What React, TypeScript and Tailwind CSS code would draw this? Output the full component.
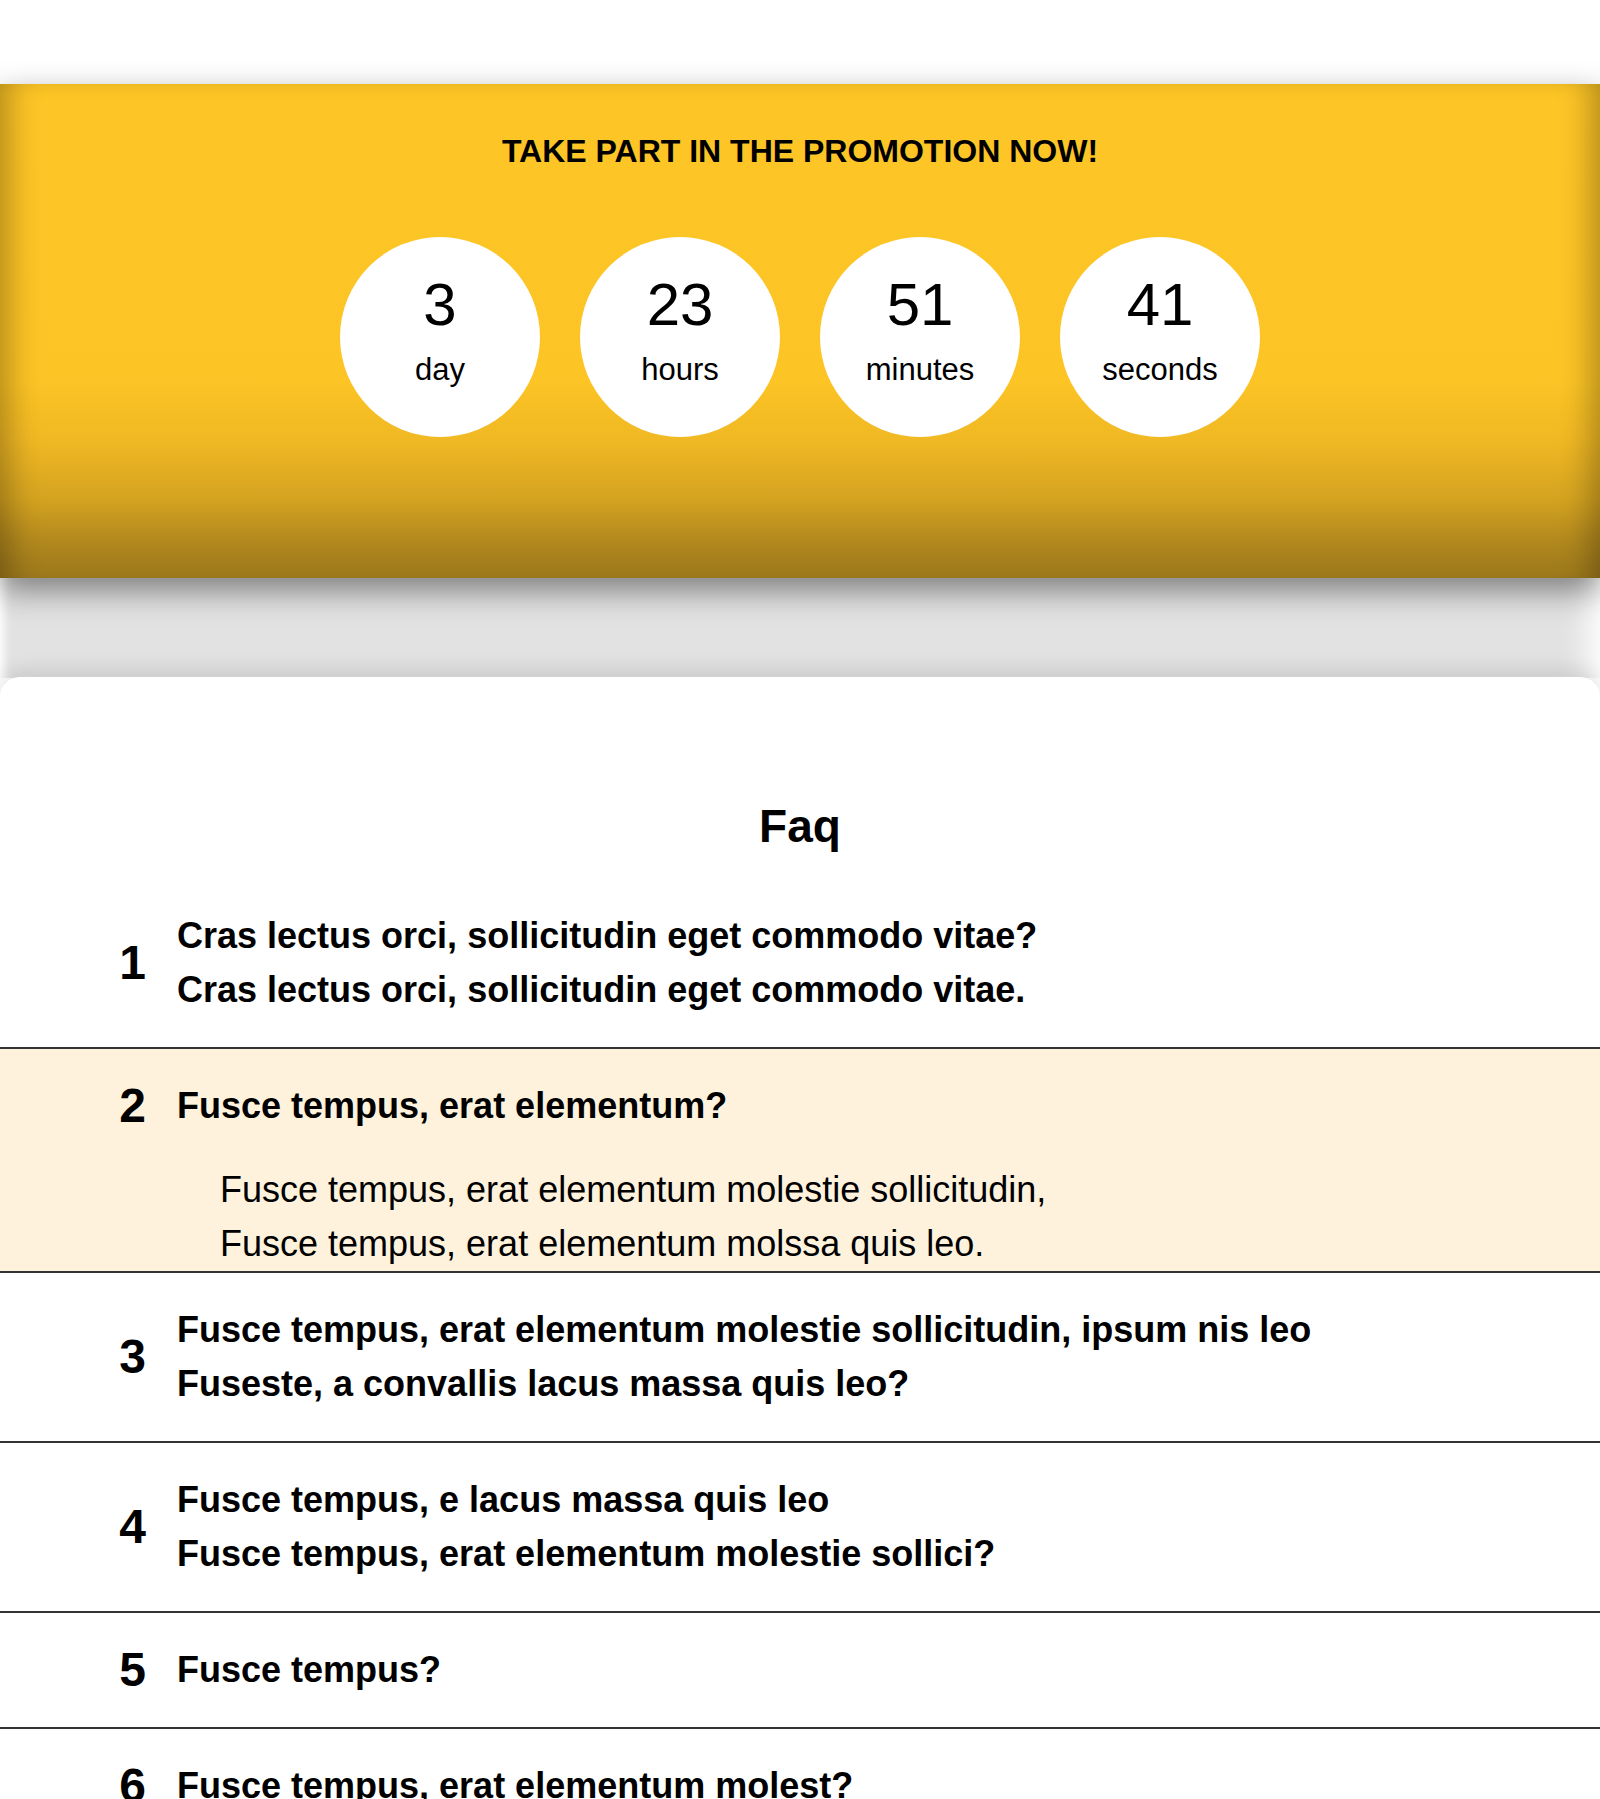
import React from "react";

const timer = [
  { value: "3", label: "day" },
  { value: "23", label: "hours" },
  { value: "51", label: "minutes" },
  { value: "41", label: "seconds" },
];

const faqs = [
  {
    n: 1,
    q: ["Cras lectus orci, sollicitudin eget commodo vitae?", "Cras lectus orci, sollicitudin eget commodo vitae."],
  },
  {
    n: 2,
    q: ["Fusce tempus, erat elementum?"],
    a: ["Fusce tempus, erat elementum molestie sollicitudin,", "Fusce tempus, erat elementum molssa quis leo."],
  },
  {
    n: 3,
    q: ["Fusce tempus, erat elementum molestie sollicitudin, ipsum nis leo", "Fuseste, a convallis lacus massa quis leo?"],
  },
  {
    n: 4,
    q: ["Fusce tempus, e lacus massa quis leo", "Fusce tempus, erat elementum molestie sollici?"],
  },
  { n: 5, q: ["Fusce tempus?"] },
  { n: 6, q: ["Fusce tempus, erat elementum molest?"] },
];

export default function App() {
  return (
    <div className="min-h-screen bg-white font-['Liberation_Sans',Arial,sans-serif] text-black">
      {/* top bar */}
      <div className="h-[84px] bg-white" />

      {/* promo banner */}
      <section className="relative z-10 flex h-[494px] flex-col items-center bg-[linear-gradient(to_bottom,#fdc526_0%,#fcc425_60%,#f0b823_72%,#d4a320_84%,#b48a1e_92%,#a47e1d_97%,#a47e1d_100%)] pt-[47px] shadow-[inset_28px_0_30px_-18px_rgba(0,0,0,0.28),inset_-28px_0_30px_-18px_rgba(0,0,0,0.28),0_12px_30px_rgba(0,0,0,0.45)]">
        <h2 className="text-[32px] font-bold uppercase leading-[40px]">
          Take part in the promotion now!
        </h2>
        <div className="mt-[66px] flex gap-[40px]">
          {timer.map((t) => (
            <div
              key={t.label}
              className="flex h-[200px] w-[200px] flex-col items-center rounded-full bg-white pt-[38px]"
            >
              <span className="text-[60px] leading-[60px]">{t.value}</span>
              <span className="mt-[15px] text-[31px] leading-[40px]">{t.label}</span>
            </div>
          ))}
        </div>
      </section>

      {/* shadow band */}
      <div className="h-[100px] bg-[#e2e2e2] shadow-[inset_10px_0_10px_-6px_#fff,inset_-36px_0_30px_-24px_#fff]" />

      {/* faq card */}
      <section className="relative -mt-px rounded-t-[20px] bg-white pt-[123px] shadow-[0_-8px_18px_rgba(0,0,0,0.1)]">
        <h2 className="text-center text-[46px] font-bold leading-[52px]">Faq</h2>
        <div className="mt-[27px]">
          {faqs.map((f) => (
            <div
              key={f.n}
              className={
                f.a
                  ? "border-b-2 border-[#333] bg-[#fef2dc] pt-[30px]"
                  : "border-b-2 border-[#333] py-[30px]"
              }
            >
              <div className="flex items-center pl-[119px]">
                <span className="w-[27px] text-center text-[48px] font-bold leading-[54px]">{f.n}</span>
                <div className="ml-[31px] text-[36px] font-bold leading-[54px]">
                  {f.q.map((line) => (
                    <div key={line}>{line}</div>
                  ))}
                </div>
              </div>
              {f.a && (
                <div className="mt-[30px] pl-[220px] text-[36px] leading-[54px]">
                  {f.a.map((line) => (
                    <div key={line}>{line}</div>
                  ))}
                </div>
              )}
            </div>
          ))}
        </div>
      </section>
    </div>
  );
}
